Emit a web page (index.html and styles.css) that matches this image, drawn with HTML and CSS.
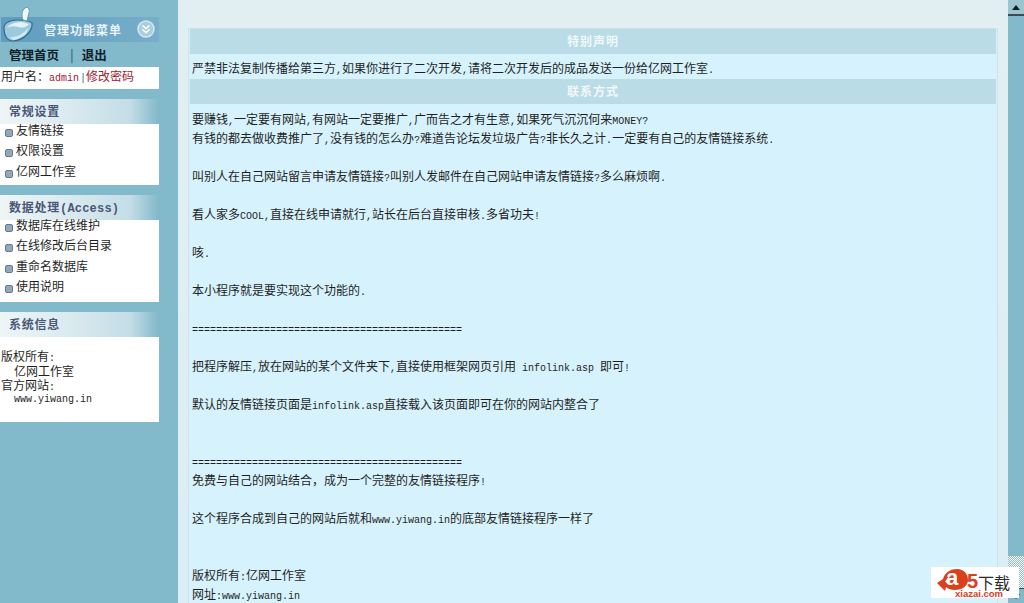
FILE: index.html
```html
<!DOCTYPE html>
<html lang="zh">
<head>
<meta charset="utf-8">
<title>管理功能菜单</title>
<link rel="stylesheet" href="styles.css">
</head>
<body>
<div class="frame">
  <aside class="side">
    <div class="head">
      <svg class="logo" width="34" height="42" viewBox="0 0 34 42">
        <path d="M3 29 C2 24 8 20 16 20 C21 20 27 20 31 23 C32 30 24 40 12 41 C6 41 3 35 3 29Z" fill="#9cc9dc" stroke="#2f6d90" stroke-width="1.200"/>
        <path d="M6 28 C8 24 15 22 21 22 L28 24 C25 28 22 28 17 27 C13 26 9 26 6 28Z" fill="#e4f2f6"/>
        <path d="M9 37 C13 38 22 35 27 28 C27 34 20 39 12 40Z" fill="#d3eaf2"/>
        <path d="M22 20 C20 15 21 10 24 8 C27 6 29 9 28 13 L26 21Z" fill="#eef6f8" stroke="#5f9ab4" stroke-width="1"/>
      </svg>
      <span class="head-title">管理功能菜单</span>
      <svg class="collapse" width="18" height="18" viewBox="0 0 18 18">
        <circle cx="9" cy="9" r="8" fill="#a9cfdf" stroke="#d3e7ef" stroke-width="1.500"/>
        <path d="M5.500 5.500 L9 8.500 L12.500 5.500 M5.500 9.500 L9 12.500 L12.500 9.500" fill="none" stroke="#fff" stroke-width="1.500"/>
      </svg>
    </div>
    <div class="home"><span>管理首页</span><i>|</i><span>退出</span></div>
    <div class="user">用户名：<span class="red m">admin</span><span class="sep m">|</span><span class="red">修改密码</span></div>

    <section class="panel p1">
      <h2>常规设置</h2>
      <ul>
        <li>友情链接</li>
        <li>权限设置</li>
        <li>亿网工作室</li>
      </ul>
    </section>
    <section class="panel p2">
      <h2>数据处理<span class="acc">(Access)</span></h2>
      <ul>
        <li>数据库在线维护</li>
        <li>在线修改后台目录</li>
        <li>重命名数据库</li>
        <li>使用说明</li>
      </ul>
    </section>
    <section class="panel p3">
      <h2>系统信息</h2>
      <div class="info">
        <div>版权所有<span class="m">:</span></div>
        <div class="ind">亿网工作室</div>
        <div>官方网站<span class="m">:</span></div>
        <div class="ind m">www.yiwang.in</div>
      </div>
    </section>
  </aside>
  <main class="main">
    <div class="card">
      <div class="bar">特别声明</div>
      <div class="notice">严禁非法复制传播给第三方<span class="m">,</span>如果你进行了二次开发<span class="m">,</span>请将二次开发后的成品发送一份给亿网工作室<span class="m">.</span></div>
      <div class="bar">联系方式</div>
      <div class="body">要赚钱<span class="m">,</span>一定要有网站<span class="m">,</span>有网站一定要推广<span class="m">,</span>广而告之才有生意<span class="m">,</span>如果死气沉沉何来<span class="m">MONEY?</span>
有钱的都去做收费推广了<span class="m">,</span>没有钱的怎么办<span class="m">?</span>难道告论坛发垃圾广告<span class="m">?</span>非长久之计<span class="m">.</span>一定要有自己的友情链接系统<span class="m">.</span>

叫别人在自己网站留言申请友情链接<span class="m">?</span>叫别人发邮件在自己网站申请友情链接<span class="m">?</span>多么麻烦啊<span class="m">.</span>

看人家多<span class="m">COOL,</span>直接在线申请就行<span class="m">,</span>站长在后台直接审核<span class="m">.</span>多省功夫<span class="m">!</span>

咳<span class="m">.</span>

本小程序就是要实现这个功能的<span class="m">.</span>

<span class="m">=============================================</span>

把程序解压<span class="m">,</span>放在网站的某个文件夹下<span class="m">,</span>直接使用框架网页引用<span class="m"> infolink.asp </span>即可<span class="m">!</span>

默认的友情链接页面是<span class="m">infolink.asp</span>直接载入该页面即可在你的网站内整合了


<span class="m">=============================================</span>
免费与自己的网站结合，成为一个完整的友情链接程序<span class="m">!</span>

这个程序合成到自己的网站后就和<span class="m">www.yiwang.in</span>的底部友情链接程序一样了


版权所有<span class="m">:</span>亿网工作室
网址<span class="m">:www.yiwang.in</span></div>
    </div>
  </main>
  <div class="scroll">
    <div class="arrow"><b></b></div>
    <div class="thumb"></div>
    <div class="track"></div>
    <div class="arrow-down"><b></b></div>
  </div>
  <div class="badge">
    <svg class="blob" width="34" height="24" viewBox="0 0 34 24">
      <path d="M1 15 L7 11 C9 4 15 1 21 1 C28 1 32 6 32 12 C32 18 26 22 19 22 C15 22 12 21 10 19 L9 23 Z" fill="#d8401e"/>
      <path d="M9 14 L14 6 L12 15Z" fill="#fff"/>
    </svg>
    <span class="glyph-a">a</span>
    <span class="glyph-5">5</span>
    <span class="dl">下载</span>
    <span class="site">xiazai.com</span>
  </div>
</div>
</body>
</html>
```
FILE: styles.css
```css
* { box-sizing: border-box; }
html, body { margin: 0; padding: 0; height: 603px; overflow: hidden; }
body { font-family: "Noto Sans CJK SC", "Liberation Sans", sans-serif; font-size: 12px; color: #1f1f1f; }
.frame { position: relative; display: flex; width: 1024px; height: 603px; overflow: hidden; }
.m { font-family: "Liberation Mono", "Noto Sans CJK SC", monospace; font-size: 10px; line-height: 1; }

.side { width: 178px; height: 603px; background: #82bacb; flex: none; }
.head { position: relative; height: 25px; margin: 17px 0 0 1px; width: 158px; background: linear-gradient(90deg, #5f9cbd, #77aec9); display: flex; align-items: center; }
.logo { position: absolute; left: 0; top: -17px; }
.head-title { margin-left: 43px; color: #e7f3f6; font-weight: 700; font-size: 12px; letter-spacing: 1px; }
.collapse { position: absolute; left: 136px; top: 3px; }
.home { height: 25px; padding-left: 9px; display: flex; align-items: center; font-weight: 700; font-size: 12.500px; color: #10202a; }
.home i { font-style: normal; margin: 0 8px 0 11px; color: #3f6f89; }
.user { width: 159px; height: 22px; background: #fff; font-size: 12px; padding-left: 1px; line-height: 18px; white-space: nowrap; }
.red { color: #a3202c; }
.sep { color: #3a6a80; margin-left: 1px; }

.panel { width: 159px; background: #fff; }
.panel h2 { margin: 0; height: 25px; padding-left: 9px; line-height: 24px; font-size: 12px; font-weight: 700; color: #4a5878; letter-spacing: .75px;
  background: linear-gradient(90deg, #eef5f7 0, #dcebf0 40%, #c3dde6 82%, #82b8ca 100%); white-space: nowrap; }
.acc { font-family: "Liberation Mono", monospace; font-size: 12px; letter-spacing: .2px; line-height: 1; }
.p1 { margin-top: 10px; height: 86px; }
.p2 { margin-top: 10px; height: 107px; }
.p3 { margin-top: 10px; height: 110px; }
.panel ul { margin: 0; padding: 0; list-style: none; }
.p2 ul { margin-top: -1px; }
.panel li { position: relative; height: 20.300px; padding-left: 16px; line-height: 12px; font-size: 12px; white-space: nowrap; }
.panel li::before { content: ""; position: absolute; left: 5px; top: 5px; width: 6px; height: 6px; border-radius: 2px; background: #93a8b8; border: 1px solid #647c90; }
.info { padding: 12px 0 0 1px; font-size: 12px; line-height: 14.400px; }
.ind { padding-left: 13px; }
.info .ind.m { line-height: 14.400px; }

.main { flex: 1; height: 603px; background: linear-gradient(180deg, #e2eff2 0, #dbeef5 100%); padding: 29px 0 0 11px; min-width: 0; }
.card { width: 808px; height: 600px; background: #d6f2fc; box-shadow: 0 0 0 1px #cde3ea; }
.bar { height: 25px; margin: 0 1px; background: #b9dce6; color: #f1f8fa; text-align: center; font-size: 12px; letter-spacing: 1px; font-weight: 700; line-height: 24px; }
.notice { height: 25px; padding-left: 3px; line-height: 27px; font-size: 12px; white-space: nowrap; }
.body { padding: 0 0 0 3px; margin-top: 4.500px; white-space: pre-wrap; font-size: 12px; line-height: 19.020px; }

.scroll { width: 16px; height: 603px; flex: none; display: flex; flex-direction: column; }
.arrow { height: 16px; background: #9cc5d4; border-bottom: 2px solid #3c4c55; display: flex; align-items: center; justify-content: center; }
.arrow b { width: 0; height: 0; border-left: 4px solid transparent; border-right: 4px solid transparent; border-bottom: 5px solid #0c1c25; }
.thumb { height: 540px; background: #82bacb; }
.track { height: 32px; background-color: #f1f8fa; background-image: repeating-conic-gradient(#9cbcc8 0 25%, #eef7fa 0 50%); background-size: 2px 2px; }
.arrow-down { flex: 1; background: #82bacb; border-top: 1px solid #3c4c55; display: flex; align-items: center; justify-content: center; }
.arrow-down b { width: 0; height: 0; border-left: 4px solid transparent; border-right: 4px solid transparent; border-top: 5px solid #0c1c25; }

.badge { position: absolute; left: 931px; top: 567px; width: 88px; height: 31px; background: #fff; }
.blob { position: absolute; left: 5px; top: 1px; }
.glyph-a { position: absolute; left: 15px; top: 0; font-family: "Liberation Sans", sans-serif; font-weight: 700; font-size: 22px; line-height: 22px; color: #fff; }
.glyph-5 { position: absolute; left: 36px; top: 4px; font-family: "Liberation Sans", sans-serif; font-weight: 700; font-size: 20px; line-height: 20px; color: #d8401e; }
.dl { position: absolute; left: 47px; top: 7px; font-size: 16px; line-height: 16px; color: #2c2c2c; }
.site { position: absolute; left: 24px; top: 23px; font-family: "Liberation Sans", sans-serif; font-weight: 700; font-size: 9.500px; line-height: 8px; color: #d8401e; }
```
